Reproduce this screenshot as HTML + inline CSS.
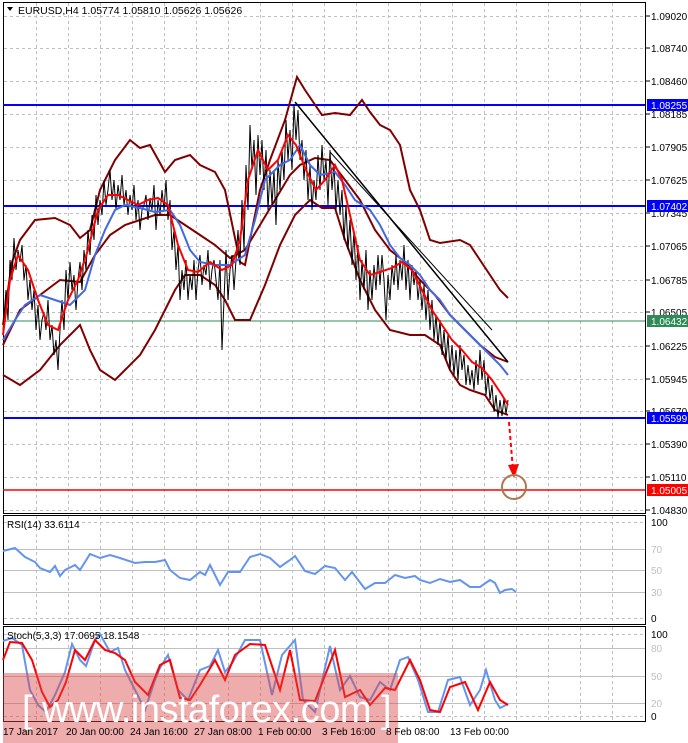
<!DOCTYPE html>
<html><head><meta charset="utf-8"><style>
body{margin:0;background:#fff;width:688px;height:743px;overflow:hidden;font-family:"Liberation Sans",sans-serif}
svg{position:absolute;left:0;top:0}
</style></head><body>
<svg width="688" height="743" viewBox="0 0 688 743" font-family="Liberation Sans, sans-serif" font-size="10">
<rect x="0" y="0" width="688" height="743" fill="#fff"/>
<!-- panels -->
<g fill="none" stroke="#000" stroke-width="1">
<rect x="3.5" y="2.5" width="642" height="511"/>
<rect x="3.5" y="515.5" width="642" height="109"/>
<rect x="3.5" y="626.5" width="642" height="95"/>
</g>
<!-- grid -->
<g stroke="#c0c0c0" stroke-dasharray="3,3" stroke-width="1">
<path d="M36.5 3V513M68.5 3V513M100.5 3V513M132.5 3V513M164.5 3V513M196.5 3V513M228.5 3V513M260.5 3V513M292.5 3V513M324.5 3V513M356.5 3V513M388.5 3V513M420.5 3V513M452.5 3V513M484.5 3V513M516.5 3V513M548.5 3V513M580.5 3V513M612.5 3V513"/>
<path d="M36.5 516V624M68.5 516V624M100.5 516V624M132.5 516V624M164.5 516V624M196.5 516V624M228.5 516V624M260.5 516V624M292.5 516V624M324.5 516V624M356.5 516V624M388.5 516V624M420.5 516V624M452.5 516V624M484.5 516V624M516.5 516V624M548.5 516V624M580.5 516V624M612.5 516V624"/>
<path d="M36.5 627V721M68.5 627V721M100.5 627V721M132.5 627V721M164.5 627V721M196.5 627V721M228.5 627V721M260.5 627V721M292.5 627V721M324.5 627V721M356.5 627V721M388.5 627V721M420.5 627V721M452.5 627V721M484.5 627V721M516.5 627V721M548.5 627V721M580.5 627V721M612.5 627V721"/>
<path d="M4 16.5H645M4 48.5H645M4 81.5H645M4 114.5H645M4 147.5H645M4 180.5H645M4 213.5H645M4 246.5H645M4 280.5H645M4 312.5H645M4 346.5H645M4 379.5H645M4 411.5H645M4 444.5H645M4 477.5H645M4 510.5H645"/>
<path d="M4 522.5H645M4 618.5H645M4 634.5H645M4 716.5H645"/>
</g>
<g stroke="#c0c0c0" stroke-width="1"><path d="M4 549.5H645M4 570.5H645M4 592.5H645M4 648.5H645M4 676.5H645M4 703.5H645"/></g>
<!-- horizontal level lines -->
<path d="M3 105H645" stroke="#0000ff" stroke-width="2"/>
<path d="M3 206H645" stroke="#0000ff" stroke-width="2"/>
<path d="M3 321H645" stroke="#2e8b57" stroke-width="1"/>
<path d="M3 418H645" stroke="#0000ff" stroke-width="2"/>
<path d="M3 490H645" stroke="#ff0000" stroke-width="1.5"/>
<!-- bollinger -->
<g fill="none" stroke="#800000" stroke-width="2">
<polyline points="3,325 12,262 20,240 35,220 55,218 70,225 80,238 90,230 100,190 115,160 130,140 140,148 150,145 165,172 175,160 190,155 200,165 215,172 225,190 240,262 245,265 250,240 260,190 270,160 285,120 297,77 305,90 322,115 335,113 350,115 362,100 370,112 380,125 390,130 400,145 410,190 420,210 430,240 440,243 460,240 470,245 480,260 490,275 500,290 508,298"/>
<polyline points="3,375 20,385 40,370 60,345 80,325 90,350 100,370 115,380 125,370 140,355 155,330 165,310 175,290 185,275 200,275 215,285 225,300 235,320 250,320 265,285 280,245 295,215 310,200 322,208 335,208 345,240 360,280 375,310 390,330 410,335 425,335 440,345 450,370 460,385 470,390 485,395 495,410 508,415"/>
<polyline points="3,345 20,310 40,295 60,280 80,282 95,255 110,235 125,225 140,220 155,215 170,215 185,225 200,235 215,245 230,258 245,250 260,225 275,200 290,175 300,165 315,158 330,160 345,180 360,200 375,230 390,250 405,262 420,280 435,295 450,315 465,330 480,345 495,357 508,362"/>
</g>
<!-- trend lines -->
<path d="M295 102L508 362" stroke="#000" stroke-width="1.5"/>
<path d="M330 152L492 330" stroke="#000" stroke-width="1"/>
<!-- candles -->
<g stroke="#000" stroke-width="1" fill="none">
<polyline points="3,330 6,290 8,320 10,260 12,280 14,238 16,270 18,250 20,262 22,245 24,280 26,265 28,300 30,280 32,310 34,290 36,330 38,305 40,340 42,320 44,312 46,330 48,300 50,340 52,325 54,355 56,340 58,370 60,330 62,300 64,330 66,270 68,300 70,262 72,290 74,275 76,310 78,280 80,262 82,290 84,250 86,270 88,230 90,255 92,215 94,240 96,195 98,225 100,200 102,215 104,180 106,205 108,190 110,170 112,200 114,180 116,210 118,185 120,200 122,175 124,205 126,190 128,215 130,195 132,210 134,185 136,220 138,200 140,230 142,210 144,205 146,195 148,220 150,198 152,210 154,185 156,230 158,200 160,215 162,190 164,210 166,180 168,220 170,200 172,250 174,230 176,270 178,245 180,300 182,270 184,290 186,260 188,300 190,275 192,290 194,260 196,300 198,270 200,255 202,285 204,265 206,275 208,250 210,290 212,270 214,260 216,280 218,300 220,260 222,350 224,300 226,250 228,300 230,270 232,255 234,290 236,260 238,230 240,265 242,200 244,250 246,165 248,210 250,125 252,170 254,140 256,195 258,135 260,175 262,140 264,190 266,150 268,210 270,170 272,205 274,170 276,225 278,160 280,190 282,150 284,180 286,120 288,160 290,130 292,170 294,104 296,140 298,110 300,160 302,140 304,180 306,150 308,200 310,165 312,210 314,180 316,200 318,155 320,190 322,145 324,180 326,160 328,205 330,150 332,190 334,165 336,210 338,180 340,215 342,190 344,240 346,205 348,250 350,220 352,265 354,230 356,280 358,245 360,300 362,260 364,290 366,250 368,310 370,270 372,300 374,265 376,290 378,255 380,285 382,255 384,280 386,320 388,275 390,300 392,265 394,285 396,255 398,290 400,260 402,280 404,245 406,290 408,260 410,300 412,265 414,285 416,270 418,300 420,280 422,310 424,285 426,320 428,290 430,330 432,300 434,340 436,315 438,345 440,320 442,355 444,330 446,360 448,335 450,370 452,345 454,375 456,350 458,380 460,345 462,370 464,355 466,385 468,365 470,385 472,370 474,390 476,360 478,385 480,350 482,380 484,360 486,395 488,375 490,400 492,385 494,412 496,395 498,418 500,400 502,416 504,398 506,414 508,400"/>
</g>
<!-- MAs -->
<polyline fill="none" stroke="#4169e1" stroke-width="2" points="3,340 15,320 25,305 40,295 55,300 70,305 85,290 95,255 105,230 115,210 125,205 140,208 155,212 170,210 180,225 190,250 200,262 215,265 230,265 245,255 255,220 265,180 280,165 290,160 300,145 310,165 320,175 335,172 345,185 355,200 370,210 380,225 390,245 400,258 410,265 420,275 430,290 440,300 450,315 460,325 470,335 480,345 490,355 500,365 508,375"/>
<polyline fill="none" stroke="#ff0000" stroke-width="2" points="3,335 10,280 18,255 28,270 38,300 48,325 58,330 68,300 78,280 88,250 98,210 108,195 118,195 128,200 138,205 148,200 158,198 168,205 178,245 188,270 198,272 210,262 222,270 232,265 240,240 248,180 258,150 268,170 278,160 288,135 296,145 306,170 316,190 325,180 335,165 342,180 350,215 360,260 370,275 380,272 392,268 402,262 412,270 422,290 432,310 442,325 452,340 462,350 472,362 482,368 492,380 502,395 508,405"/>
<!-- arrow + circle -->
<path d="M509 422L513 470" stroke="#ff0000" stroke-width="2" stroke-dasharray="4,3"/>
<path d="M508 465L514 478L519 464Z" fill="#ff0000"/>
<circle cx="514" cy="487" r="12" fill="none" stroke="#b07850" stroke-width="2"/>
<!-- title -->
<path d="M7 7L13 7L10 11Z" fill="#000"/>
<text x="18" y="14" font-size="10.5">EURUSD,H4  1.05774 1.05810 1.05626 1.05626</text>
<!-- price axis -->
<g font-size="10" fill="#000">
<path d="M646 16H650M646 48H650M646 81H650M646 114H650M646 147H650M646 180H650M646 213H650M646 246H650M646 280H650M646 312H650M646 346H650M646 379H650M646 411H650M646 444H650M646 477H650M646 510H650" stroke="#000"/>
<text x="651" y="20">1.09020</text><text x="651" y="52">1.08740</text><text x="651" y="85">1.08460</text><text x="651" y="118">1.08185</text><text x="651" y="151">1.07905</text><text x="651" y="184">1.07625</text><text x="651" y="217">1.07345</text><text x="651" y="250">1.07065</text><text x="651" y="284">1.06785</text><text x="651" y="316">1.06505</text><text x="651" y="350">1.06225</text><text x="651" y="383">1.05945</text><text x="651" y="415">1.05670</text><text x="651" y="448">1.05390</text><text x="651" y="481">1.05110</text><text x="651" y="514">1.04830</text>
</g>
<rect x="647" y="99" width="41" height="12" fill="#0000ff"/><text x="651" y="109" fill="#fff">1.08255</text>
<rect x="647" y="200" width="41" height="12" fill="#0000ff"/><text x="651" y="210" fill="#fff">1.07402</text>
<rect x="647" y="315" width="41" height="12" fill="#2e8b57"/><text x="651" y="325" fill="#fff">1.06432</text>
<rect x="647" y="412" width="41" height="12" fill="#0000ff"/><text x="651" y="422" fill="#fff">1.05599</text>
<rect x="647" y="484" width="41" height="12" fill="#ff0000"/><text x="651" y="494" fill="#fff">1.05005</text>
<!-- RSI -->
<text x="7" y="528">RSI(14) 33.6114</text>
<polyline fill="none" stroke="#6495ed" stroke-width="2" points="3,551 15,548 25,557 35,562 40,568 50,572 55,566 60,576 65,570 75,565 80,570 90,554 100,558 110,555 120,558 135,563 145,562 155,562 165,560 170,570 180,578 190,580 200,572 205,575 210,565 220,585 228,572 240,572 250,557 260,554 270,558 280,567 290,560 295,556 305,571 315,574 325,566 335,568 345,580 352,572 365,589 375,583 385,583 395,575 405,578 415,576 420,580 430,583 440,579 450,582 460,580 470,587 480,587 490,580 495,583 500,593 505,590 512,589 516,592"/>
<g fill="#c0c0c0" font-size="10"><text x="651" y="553">70</text><text x="651" y="574">50</text><text x="651" y="596">30</text></g>
<g font-size="10"><text x="651" y="526">100</text><text x="651" y="622">0</text><text x="651" y="638">100</text><text x="651" y="720">0</text></g>
<g fill="#c0c0c0" font-size="10"><text x="651" y="652">80</text><text x="651" y="680">50</text><text x="651" y="707">20</text></g>
<!-- Stoch -->
<polyline fill="none" stroke="#6495ed" stroke-width="2" points="3,641 12,638 22,645 30,690 38,705 46,712 55,695 65,672 72,644 80,660 86,666 95,640 100,634 110,652 118,648 125,670 135,690 145,710 155,680 160,668 168,655 178,690 188,700 200,670 210,666 218,650 225,672 233,662 245,640 260,640 272,695 282,655 295,640 303,700 315,712 330,646 340,690 350,676 360,697 370,700 380,682 390,690 400,660 408,657 418,680 428,712 438,712 448,680 460,677 470,705 480,690 486,670 495,700 500,708 508,704"/>
<polyline fill="none" stroke="#ff0000" stroke-width="2" points="3,660 10,642 22,643 32,660 42,692 50,707 58,700 66,682 75,650 85,660 95,640 105,650 115,653 125,660 135,682 148,695 160,665 170,660 180,698 190,700 200,685 215,660 225,680 235,655 250,644 265,645 280,690 290,650 300,700 315,701 335,650 345,697 360,690 370,705 385,688 395,690 410,660 420,680 430,710 440,712 450,687 465,682 478,710 490,682 500,700 508,705"/>
<text x="7" y="639">Stoch(5,3,3) 17.0695 18.1548</text>
<!-- watermark -->
<rect x="3" y="673" width="395" height="70" fill="rgba(220,70,70,0.45)"/>
<text x="22" y="722" font-size="38" fill="#fff" letter-spacing="-0.5">[ www.instaforex.com ]</text>
<!-- dates -->
<g font-size="10" fill="#000">
<text x="3" y="735">17 Jan 2017</text><text x="66" y="735">20 Jan 00:00</text><text x="130" y="735">24 Jan 16:00</text><text x="194" y="735">27 Jan 08:00</text><text x="258" y="735">1 Feb 00:00</text><text x="322" y="735">3 Feb 16:00</text><text x="386" y="735">8 Feb 08:00</text><text x="450" y="735">13 Feb 00:00</text>
</g>
</svg>
</body></html>
